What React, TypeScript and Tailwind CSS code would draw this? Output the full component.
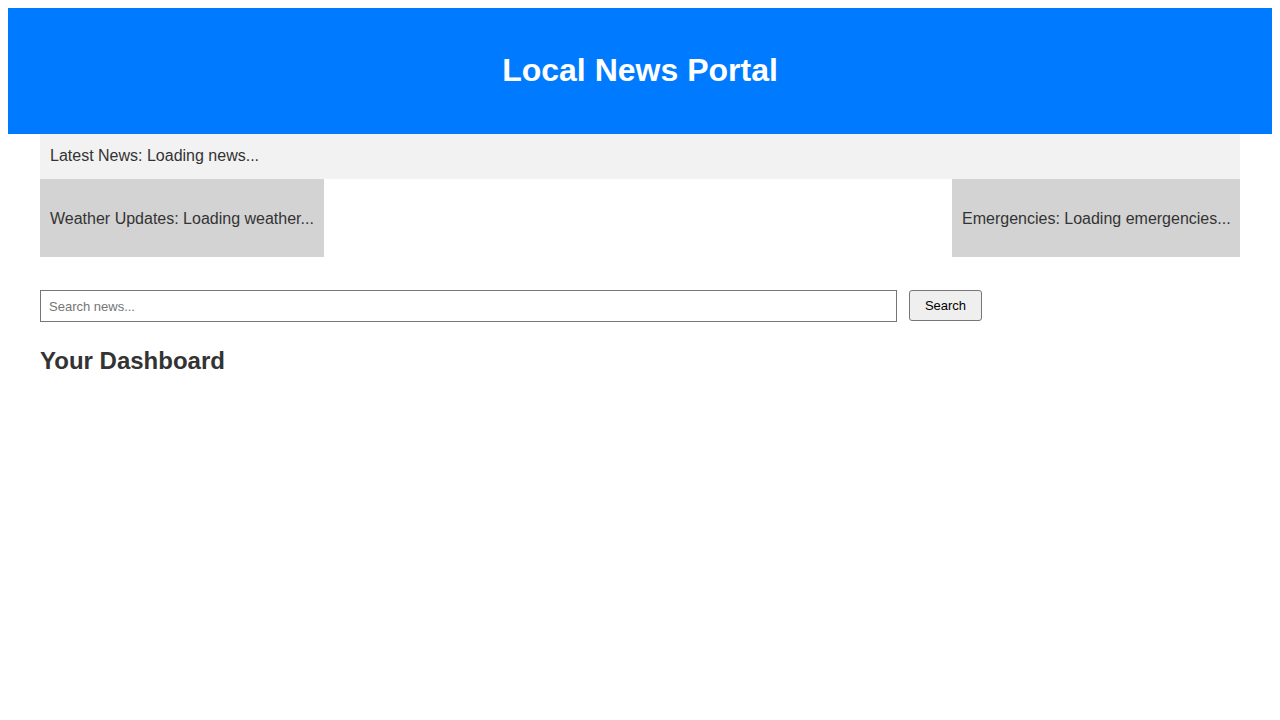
export default function App() {
  return (
    <div className="min-h-[720px] bg-white p-2 text-[#333] font-['Liberation_Sans',Arial,sans-serif]">
      {/* Header */}
      <header className="flex h-[126px] items-center justify-center bg-[#007bff] pb-[2px]">
        <h1 className="text-[32px] font-bold leading-[37px] text-white">Local News Portal</h1>
      </header>

      <main className="ml-[32px] w-[1200px]">
        {/* Ticker */}
        <section className="h-[45px] bg-[#f2f2f2] px-[10px] pt-[13px] text-base leading-[18px]">
          <p>
            Latest News: <span>Loading news...</span>
          </p>
        </section>

        {/* Widgets */}
        <div className="flex justify-between">
          <section className="h-[78px] w-[284px] bg-[#d3d3d3] px-[10px] pt-[31px] text-base leading-[18px]">
            <p className="whitespace-nowrap">
              Weather Updates: <span>Loading weather...</span>
            </p>
          </section>
          <section className="h-[78px] w-[288px] bg-[#d3d3d3] px-[10px] pt-[31px] text-base leading-[18px]">
            <p className="whitespace-nowrap">
              Emergencies: <span>Loading emergencies...</span>
            </p>
          </section>
        </div>

        {/* Search */}
        <form className="mt-[33px] flex items-start gap-[12px]">
          <input
            type="text"
            placeholder="Search news..."
            className="h-[32px] w-[857px] border border-[#767676] bg-white px-[8px] text-[13px] text-black placeholder:text-[#757575] font-['Liberation_Sans',Arial,sans-serif]"
          />
          <button
            type="button"
            className="h-[31px] w-[73px] rounded-[3px] border border-[#767676] bg-[#efefef] text-[13px] text-black font-['Liberation_Sans',Arial,sans-serif]"
          >
            Search
          </button>
        </form>

        {/* Dashboard */}
        <section className="mt-[25px]">
          <h2 className="text-[24px] font-bold leading-[28px]">Your Dashboard</h2>
        </section>
      </main>
    </div>
  );
}
